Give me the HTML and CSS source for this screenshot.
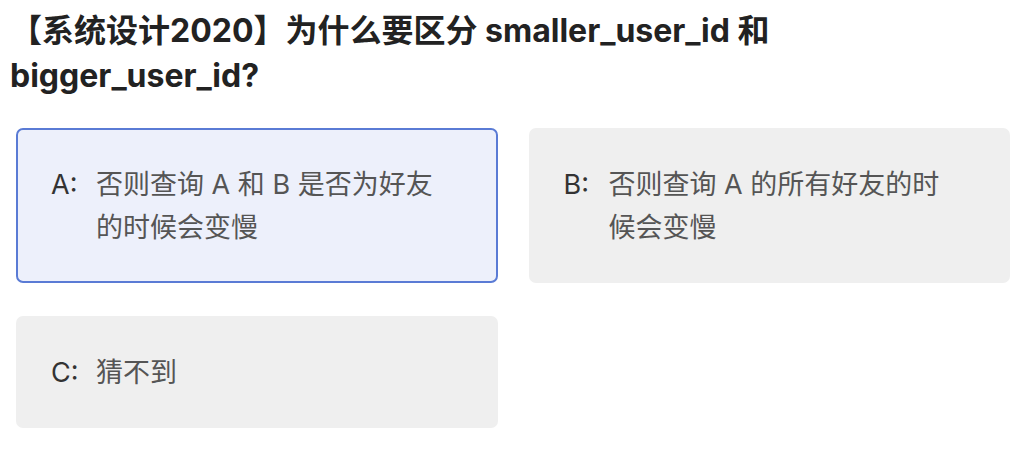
FILE: index.html
```html
<!DOCTYPE html>
<html lang="zh-CN">
<head>
<meta charset="utf-8">
<link rel="stylesheet" href="styles.css">
</head>
<body>
<div class="page">
  <h1 class="title">【系统设计2020】为什么要区分 smaller_user_id 和 bigger_user_id?</h1>
  <div class="options">
    <div class="option selected">
      <span class="label">A:</span>
      <span class="text">否则查询 A 和 B 是否为好友的时候会变慢</span>
    </div>
    <div class="option">
      <span class="label">B:</span>
      <span class="text">否则查询 A 的所有好友的时候会变慢</span>
    </div>
    <div class="option">
      <span class="label">C:</span>
      <span class="text">猜不到</span>
    </div>
  </div>
</div>
</body>
</html>
```

FILE: styles.css
```css
html, body {
  margin: 0;
  padding: 0;
  background: #ffffff;
}

.page {
  padding: 8px 10px;
  font-family: Inter, "Noto Sans CJK SC", sans-serif;
}

.title {
  margin: 0;
  font-size: 32px;
  line-height: 45px;
  font-weight: 700;
  color: #222222;
}

.options {
  margin-top: 30px;
  padding: 0 6px;
  display: grid;
  grid-template-columns: 1fr 1fr;
  column-gap: 31px;
  row-gap: 33px;
}

.option {
  display: flex;
  align-items: flex-start;
  background: #efefef;
  border: 2px solid transparent;
  border-radius: 7px;
  padding: 33px 55px 32px 33px;
  font-size: 27px;
  line-height: 43px;
}

.option.selected {
  background: #edf0fb;
  border-color: #5a7bd5;
}

.label {
  flex: 0 0 45px;
  color: #333333;
}

.text {
  flex: 1;
  color: #555555;
}
```
